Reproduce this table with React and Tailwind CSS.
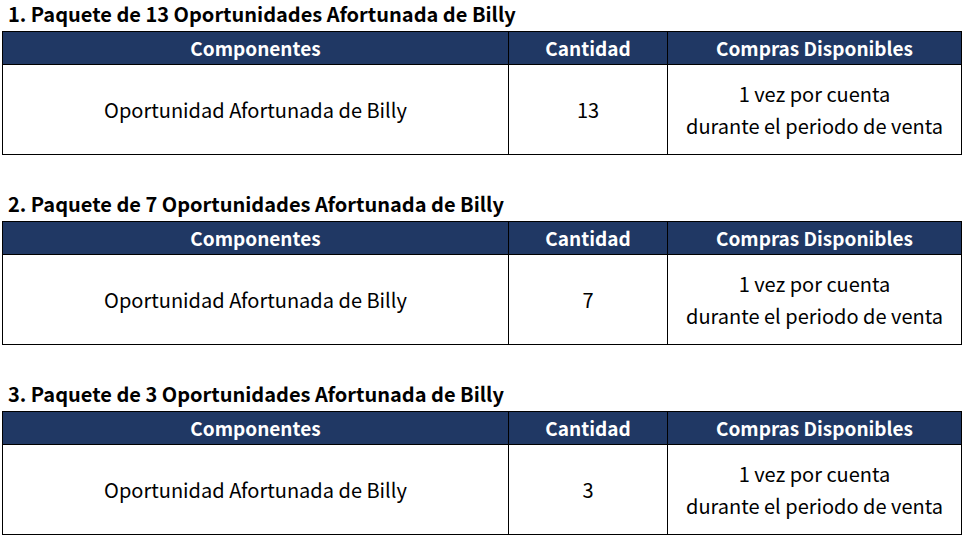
import React from 'react';

const packs = [
  { n: 1, qty: 13 },
  { n: 2, qty: 7 },
  { n: 3, qty: 3 },
];

const PackTable = ({ n, qty }) => (
  <section>
    <h2 className="h-[31px] pl-[8px] pt-[1px] text-[20px] font-bold leading-[26px] text-black">
      {n}. Paquete de {qty} Oportunidades Afortunada de Billy
    </h2>
    <table className="ml-[2px] w-[959px] table-fixed border-collapse text-center">
      <colgroup>
        <col className="w-[506px]" />
        <col className="w-[159px]" />
        <col className="w-[294px]" />
      </colgroup>
      <thead>
        <tr className="h-[33px] bg-[#203864] text-[19px] font-bold text-white">
          <th className="border border-black p-0">Componentes</th>
          <th className="border border-black p-0">Cantidad</th>
          <th className="border border-black p-0">Compras Disponibles</th>
        </tr>
      </thead>
      <tbody>
        <tr className="h-[90px] text-[20px] text-black">
          <td className="border border-black p-0">Oportunidad Afortunada de Billy</td>
          <td className="border border-black p-0">{qty}</td>
          <td className="border border-black p-0 leading-[32px]">
            1 vez por cuenta
            <br />
            durante el periodo de venta
          </td>
        </tr>
      </tbody>
    </table>
  </section>
);

export default function App() {
  return (
    <div
      className="flex h-[539px] w-[963px] flex-col gap-[35px] bg-white"
      style={{ fontFamily: '"Noto Sans CJK KR", "Noto Sans", sans-serif' }}
    >
      {packs.map((p) => (
        <PackTable key={p.n} n={p.n} qty={p.qty} />
      ))}
    </div>
  );
}
